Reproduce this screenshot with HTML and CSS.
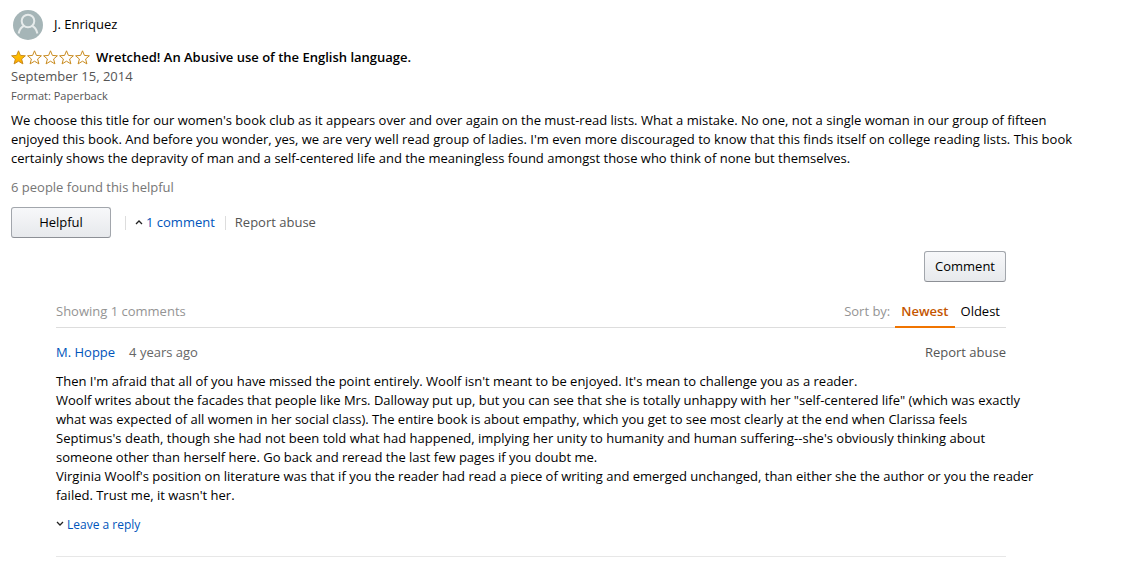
FILE: index.html
```html
<!DOCTYPE html>
<html lang="en">
<head>
  <meta charset="UTF-8" />
  <meta name="viewport" content="width=device-width, initial-scale=1.0"/>
  <title>Customer Review</title>
  <link rel="stylesheet" href="styles.css">
</head>
<body>
  <svg class="sprite" aria-hidden="true">
    <defs>
      <linearGradient id="gold" x1="0" y1="0" x2="0" y2="1">
        <stop offset="0" stop-color="#ffce00"/>
        <stop offset="1" stop-color="#ffa700"/>
      </linearGradient>
      <path id="star" d="M7.5 0.8 L9.4 5.4 L14.4 5.8 L10.6 9 L11.9 13.9 L7.5 11.2 L3.1 13.9 L4.4 9 L0.6 5.8 L5.6 5.4 Z"/>
    </defs>
  </svg>
  <main class="review">
    <div class="profile">
      <svg class="avatar" viewBox="0 0 30 30" aria-hidden="true">
        <circle cx="15" cy="15" r="15" fill="#a5b5b7"/>
        <circle cx="15" cy="11" r="6.3" fill="none" stroke="#e6ebeb" stroke-width="2"/>
        <path d="M5.6 23.5 C6.6 19 8.6 16.8 11.3 15.8 M18.7 15.8 C21.4 16.8 23.4 19 24.4 23.5" fill="none" stroke="#e6ebeb" stroke-width="2"/>
      </svg>
      <span>J. Enriquez</span>
    </div>
    <div class="rating">
      <svg class="stars" viewBox="0 0 79 15" role="img" aria-label="1 out of 5 stars">
        <g fill="#fff" stroke="#c98b1f" stroke-width="1">
          <use href="#star" fill="url(#gold)"/>
          <use href="#star" x="16"/>
          <use href="#star" x="32"/>
          <use href="#star" x="48"/>
          <use href="#star" x="64"/>
        </g>
      </svg>
      <h1>Wretched! An Abusive use of the English language.</h1>
    </div>
    <p class="date">September 15, 2014</p>
    <p class="format">Format: Paperback</p>
    <p class="text">
      We choose this title for our women's book club as it appears over and over again on the must-read lists. What a mistake. No one, not a single woman in our group of fifteen<br>
      enjoyed this book. And before you wonder, yes, we are very well read group of ladies. I'm even more discouraged to know that this finds itself on college reading lists. This book<br>
      certainly shows the depravity of man and a self-centered life and the meaningless found amongst those who think of none but themselves.
    </p>
    <p class="votes">6 people found this helpful</p>
    <div class="actions">
      <button class="btn helpful">Helpful</button>
      <a class="action" href="#comments">
        <svg class="caret" viewBox="0 0 8 6" aria-hidden="true"><path d="M1 5 L4 2 L7 5"/></svg>1 comment</a>
      <a class="action report" href="#report">Report abuse</a>
    </div>

    <section class="comments" id="comments">
      <div class="add">
        <button class="btn">Comment</button>
      </div>
      <div class="toolbar">
        <span class="count">Showing 1 comments</span>
        <span class="sort-label">Sort by:</span>
        <a class="tab active" href="#newest">Newest</a>
        <a class="tab" href="#oldest">Oldest</a>
      </div>
      <article class="comment">
        <div class="comment-head">
          <a href="#profile">M. Hoppe</a>
          <span class="ago">4 years ago</span>
          <a class="report" href="#report">Report abuse</a>
        </div>
        <div class="comment-text">
          Then I'm afraid that all of you have missed the point entirely. Woolf isn't meant to be enjoyed. It's mean to challenge you as a reader.<br>
          Woolf writes about the facades that people like Mrs. Dalloway put up, but you can see that she is totally unhappy with her "self-centered life" (which was exactly<br>
          what was expected of all women in her social class). The entire book is about empathy, which you get to see most clearly at the end when Clarissa feels<br>
          Septimus's death, though she had not been told what had happened, implying her unity to humanity and human suffering--she's obviously thinking about<br>
          someone other than herself here. Go back and reread the last few pages if you doubt me.<br>
          Virginia Woolf's position on literature was that if you the reader had read a piece of writing and emerged unchanged, than either she the author or you the reader<br>
          failed. Trust me, it wasn't her.
        </div>
        <a class="reply" href="#reply">
          <svg class="caret" viewBox="0 0 8 6" aria-hidden="true"><path d="M1 1 L4 4 L7 1"/></svg>Leave a reply</a>
      </article>
    </section>
  </main>
</body>
</html>
```
FILE: styles.css
```css
* {
  box-sizing: border-box;
  margin: 0;
  padding: 0;
}

body {
  background-color: #fff;
  color: #111;
  font-family: 'Open Sans', 'Noto Sans', sans-serif;
  font-size: 13px;
  line-height: 19px;
}

a {
  color: #0055bb;
  text-decoration: none;
}

.sprite {
  position: absolute;
  width: 0;
  height: 0;
}

.review {
  max-width: 1120px;
  padding: 10px 11px;
}

.profile {
  display: flex;
  gap: 11px;
  padding-left: 2px;
  color: #000;
  line-height: 28px;
}

.avatar {
  width: 30px;
  height: 30px;
}

.rating {
  display: flex;
  align-items: center;
  gap: 6px;
  margin-top: 8px;
}

.stars {
  width: 79px;
  height: 15px;
}

.rating h1 {
  font-size: 13px;
  font-weight: 600;
  color: #000;
}

.date {
  color: #555;
}

.format {
  font-size: 11px;
  color: #555;
}

.text {
  margin-top: 6px;
  color: #000;
}

.votes {
  margin-top: 10px;
  color: #767676;
}

.actions {
  display: flex;
  align-items: center;
  margin-top: 10px;
}

.btn {
  height: 31px;
  padding: 0 10px;
  border: 1px solid #a2a6ac;
  border-bottom-color: #8d9096;
  border-radius: 3px;
  background: linear-gradient(#f7f8fa, #e7e9ec);
  color: #000;
  font: inherit;
  cursor: pointer;
}

.helpful {
  width: 100px;
  margin-right: 14px;
}

.action {
  height: 14px;
  padding: 0 10px 0 9px;
  border-left: 1px solid #ddd;
  line-height: 13px;
}

.report {
  color: #555;
}

.caret {
  width: 8px;
  height: 6px;
  margin-right: 3px;
  vertical-align: 2px;
  fill: none;
  stroke: #222;
  stroke-width: 1.3;
}

.comments {
  max-width: 950px;
  margin: 13px 45px 0;
}

.add {
  text-align: right;
}

.toolbar {
  display: flex;
  margin-top: 14px;
  border-bottom: 1px solid #ddd;
}

.count,
.sort-label {
  padding-top: 6px;
  color: #949494;
}

.count {
  flex: 1;
}

.sort-label {
  margin-right: 5px;
}

.tab {
  height: 31px;
  padding: 6px 6px 0;
  color: #000;
}

.active {
  height: 32px;
  margin-bottom: -1px;
  border-bottom: 2px solid #f07400;
  color: #c45500;
  font-weight: 600;
}

.comment {
  padding: 15px 0 22px;
  border-bottom: 1px solid #e7e7e7;
  color: #000;
}

.comment-head {
  display: flex;
  gap: 14px;
  margin-bottom: 10px;
}

.comment-text {
  margin-right: -40px;
}

.ago {
  flex: 1;
  color: #666;
}

.reply {
  display: block;
  margin-top: 10px;
  font-size: 12px;
}
```
